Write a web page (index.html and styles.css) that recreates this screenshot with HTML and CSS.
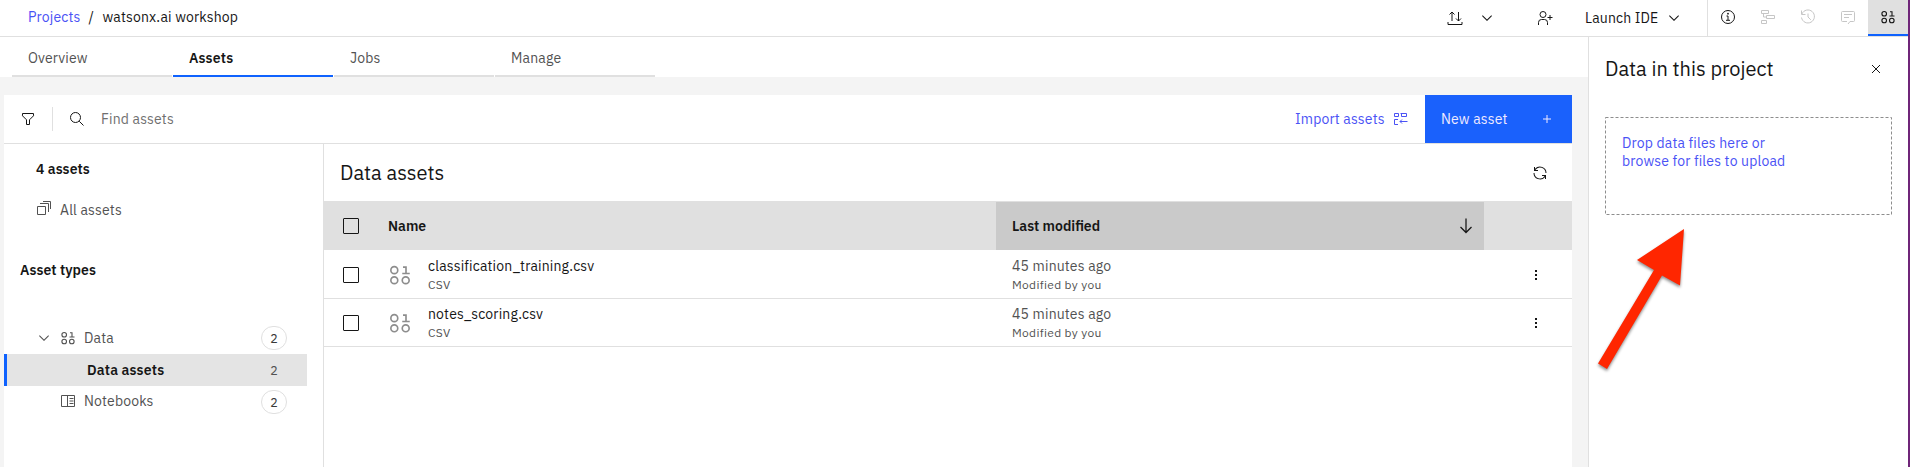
FILE: index.html
```html
<!DOCTYPE html>
<html lang="en">
<head>
<meta charset="utf-8">
<title>watsonx.ai workshop</title>
<link rel="stylesheet" href="styles.css">
</head>
<body>
<svg class="sprite" aria-hidden="true">
  <symbol id="chevron" viewBox="0 0 16 16"><path d="M8 11 3 6l.7-.7L8 9.6l4.3-4.3.7.7z"/></symbol>
  <symbol id="data" viewBox="0 0 32 32"><g fill="none" stroke="currentColor" stroke-width="2.200"><circle cx="8.400" cy="9.500" r="4.600"/><circle cx="8.400" cy="23" r="4.600"/><circle cx="23.600" cy="23" r="4.600"/><path d="M20 5.500h4v8M19 14h10"/></g></symbol>
</svg>
<div class="app">
  <header class="topbar">
    <nav class="crumbs"><a class="link">Projects</a><span class="slash">/</span><span>watsonx.ai workshop</span></nav>
    <div class="actions">
      <svg class="i16" viewBox="0 0 16 16"><path class="line" d="M1 12v2.500h14V12M5 11V2M2.500 4.500 5 2l2.500 2.500M11.500 2v9M9 8.500l2.500 2.500L14 8.500"/></svg>
      <svg class="i16 chev1"><use href="#chevron"/></svg>
      <svg class="i16 adduser" viewBox="0 0 16 16"><path class="line" d="M1.500 15v-2.500A3 3 0 0 1 4.500 9.500h3a3 3 0 0 1 3 3V15M13 5v5M10.500 7.500h5"/><circle class="line" cx="6" cy="4.500" r="3"/></svg>
      <span class="launch">Launch IDE</span>
      <svg class="i16 chev2"><use href="#chevron"/></svg>
    </div>
    <div class="panel-icons">
      <div class="cell"><svg class="i16" viewBox="0 0 16 16"><circle class="line" cx="8" cy="8" r="6.500"/><path class="line" d="M6.500 7H8v4M6 11.300h4"/><circle cx="8" cy="4.700" r=".9"/></svg></div>
      <div class="cell off"><svg class="i16" viewBox="0 0 16 16"><path class="line" d="M1.500 1.500h7v3h-7zM6.500 6.500h8v3h-8zM1.500 11.500h5v3h-5zM3.500 4.500V8h3"/></svg></div>
      <div class="cell off"><svg class="i16" viewBox="0 0 16 16"><path class="line" d="M1.500 1.500v4h4M1.900 5A6.500 6.500 0 1 1 1.500 8.500M8 4.500V8l2.800 2.800"/></svg></div>
      <div class="cell off"><svg class="i16" viewBox="0 0 16 16"><path class="line" d="M7 12.500H2.500a1 1 0 0 1-1-1v-8a1 1 0 0 1 1-1h11a1 1 0 0 1 1 1v8a1 1 0 0 1-1 1H10L8 15M4 5.500h8M4 8.500h5"/></svg></div>
      <div class="cell on"><svg class="i16"><use href="#data"/></svg></div>
    </div>
  </header>
  <div class="body">
    <main class="main">
      <nav class="tabs"><a class="tab">Overview</a><a class="tab active">Assets</a><a class="tab">Jobs</a><a class="tab">Manage</a></nav>
      <div class="card">
        <div class="toolbar">
          <svg class="i16 filter" viewBox="0 0 16 16"><path class="line" d="M2.500 2.500h11v2.300L9.500 8.800v4.700h-3V8.800l-4-4z"/></svg>
          <i class="sep"></i>
          <svg class="i16" viewBox="0 0 16 16"><circle class="line" cx="6.500" cy="6.500" r="5"/><path class="line" d="M10.200 10.200l4.300 4.300"/></svg>
          <span class="placeholder">Find assets</span>
          <a class="import link"><span>Import assets</span><svg class="i16" viewBox="0 0 16 16"><path class="line" d="M1.500 2.500h4v3h-4zM8.500 2v3.500h5v-3H7.500M5 8.500H1.500v5H5M14.500 10.500H7M9 8.500l-2 2 2 2"/></svg></a>
          <button class="new"><span>New asset</span><svg class="i16" viewBox="0 0 16 16"><path class="line" d="M8 4v8M4 8h8"/></svg></button>
        </div>
        <div class="content">
          <aside class="side">
            <h2 class="count">4 assets</h2>
            <div class="all"><svg class="i16" viewBox="0 0 16 16"><path class="line" d="M1.500 6.500h8v8h-8zM4 3.500h8.500V12M7 1.500h7.500V9"/></svg><span>All assets</span></div>
            <h2 class="types">Asset types</h2>
            <ul class="tree">
              <li><svg class="i16 tw"><use href="#chevron"/></svg><svg class="i16"><use href="#data"/></svg><span class="name">Data</span><b class="badge">2</b></li>
              <li class="sel"><span class="name">Data assets</span><b class="badge plain">2</b></li>
              <li class="nb"><i class="tw"></i><svg class="i16" viewBox="0 0 16 16"><path class="line" d="M1.500 2.500h13v11h-13zM7.500 2.500v11M9.500 5.500h4M9.500 8h4M9.500 10.500h4"/></svg><span class="name">Notebooks</span><b class="badge">2</b></li>
            </ul>
          </aside>
          <section class="list">
            <div class="title"><h1>Data assets</h1><svg class="i16" viewBox="0 0 32 32"><path d="M12 10H6.780A11 11 0 0 1 27 16h2A13 13 0 0 0 6 7.680V4H4v8h8zM20 22h5.220A11 11 0 0 1 5 16H3A13 13 0 0 0 26 24.320V28h2V20H20z"/></svg></div>
            <div class="row head">
              <i class="check"></i><span class="hname">Name</span>
              <div class="modhead"><span>Last modified</span><svg class="i20" viewBox="0 0 20 20"><path class="line arrow" d="M10 2.500v14M4.500 11l5.500 5.500L15.500 11"/></svg></div>
            </div>
            <div class="row">
              <i class="check"></i><svg class="i24"><use href="#data"/></svg>
              <div class="file"><span>classification_training.csv</span><small>CSV</small></div>
              <div class="mod"><span>45 minutes ago</span><small>Modified by you</small></div>
              <svg class="i16 kebab" viewBox="0 0 16 16"><path d="M7 3h2v2H7zM7 7h2v2H7zM7 11h2v2H7z"/></svg>
            </div>
            <div class="row">
              <i class="check"></i><svg class="i24"><use href="#data"/></svg>
              <div class="file"><span>notes_scoring.csv</span><small>CSV</small></div>
              <div class="mod"><span>45 minutes ago</span><small>Modified by you</small></div>
              <svg class="i16 kebab" viewBox="0 0 16 16"><path d="M7 3h2v2H7zM7 7h2v2H7zM7 11h2v2H7z"/></svg>
            </div>
          </section>
        </div>
      </div>
    </main>
    <aside class="panel">
      <div class="panel-head"><h1>Data in this project</h1><svg class="i16" viewBox="0 0 16 16"><path class="line" d="M4 4l8 8M12 4l-8 8"/></svg></div>
      <div class="drop"><svg class="dash"><rect x=".5" y=".5" width="286" height="97"/></svg><span class="link">Drop data files here or</span><span class="link">browse for files to upload</span></div>
      <svg class="pointer" viewBox="0 0 100 150"><path d="M86 4 39 35l17 10L0 138.500l9 5.500 55-93.500 18 10z"/></svg>
    </aside>
  </div>
</div>
</body>
</html>
```
FILE: styles.css
```css
* { box-sizing: border-box; }
body { margin: 0; background: #fff; color: #161616; font: 14px/18px "IBM Plex Sans", Roboto, "Liberation Sans", sans-serif; letter-spacing: .16px; }
h1, h2, ul { margin: 0; padding: 0; list-style: none; }
h1 { font-size: 20px; font-weight: 400; line-height: 28px; letter-spacing: 0; }
h2 { font-size: 14px; font-weight: 600; line-height: 18px; letter-spacing: .05px; }
span, h1, small { white-space: nowrap; }
.sprite { display: none; }
svg { fill: currentColor; flex: none; overflow: visible; }
.line { fill: none; stroke: currentColor; stroke-width: 1; }
.i16 { width: 16px; height: 16px; }
.i20 { width: 20px; height: 20px; }
.i24 { width: 24px; height: 24px; color: #8d8d8d; }
.arrow { stroke-width: 1.250; }
.link { color: #4a52f5; }

.app { width: 1910px; height: 467px; display: flex; flex-direction: column; border-right: 2px solid #6f2579; overflow: hidden; }
.topbar { display: flex; flex: none; height: 37px; border-bottom: 1px solid #e0e0e0; }
.crumbs { display: flex; align-items: center; flex: 1; padding: 0 0 2px 28px; }
.slash { width: 22px; padding-left: 8px; }
.actions { display: flex; align-items: center; }
.chev1 { margin: 0 42px 0 16px; }
.adduser { margin-right: 32px; }
.launch { width: 73px; }
.chev2 { margin: 0 25px 0 8px; }
.panel-icons { display: flex; border-left: 1px solid #e0e0e0; }
.cell { width: 40px; height: 36px; display: flex; align-items: center; justify-content: center; padding-bottom: 2px; }
.off { color: #c6c6c6; }
.on { background: #e0e0e0; border-bottom: 2px solid #0f62fe; padding-bottom: 0; }

.body { flex: 1; display: flex; min-height: 0; }
.main { width: 1588px; background: #f4f4f4; display: flex; flex-direction: column; }
.tabs { display: flex; gap: 1px; height: 40px; padding-left: 12px; background: #fff; flex: none; }
.tab { width: 160px; height: 40px; padding: 12px 16px; border-bottom: 2px solid #e0e0e0; color: #525252; }
.tab.active { color: #161616; font-weight: 600; border-color: #0f62fe; }
.card { flex: 1; margin: 18px 16px 0 4px; background: #fff; display: flex; flex-direction: column; }
.toolbar { height: 49px; border-bottom: 1px solid #e0e0e0; display: flex; align-items: center; flex: none; }
.filter { margin-left: 16px; }
.sep { width: 1px; height: 24px; margin: 0 16px; background: #e0e0e0; }
.placeholder { flex: 1; color: #6f6f6f; margin-left: 16px; }
.import { display: flex; align-items: center; }
.import span { width: 98px; }
.new { display: flex; align-items: center; justify-content: space-between; width: 147px; height: 48px; margin-left: 16px; padding: 0 17px 0 16px; border: 0; background: #1a61fc; color: #f1eaff; font: inherit; letter-spacing: inherit; }
.content { flex: 1; display: flex; min-height: 0; }
.side { width: 320px; border-right: 1px solid #e0e0e0; }
.count { padding: 16px 0 0 32px; }
.all { display: flex; align-items: center; gap: 8px; height: 18px; margin-top: 23px; padding-left: 32px; color: #525252; }
.all svg { margin-bottom: 4px; }
.types { margin-top: 42px; padding-left: 16px; }
.tree { margin-top: 43px; width: 303px; color: #525252; }
.tree li { height: 32px; display: flex; align-items: center; padding: 0 20px 0 32px; }
.tw { width: 16px; height: 16px; margin-right: 8px; }
.name { flex: 1; margin-left: 8px; }
.tree .sel { background: #e4e4e4; border-left: 3px solid #0f62fe; color: #161616; font-weight: 600; }
.sel .name { margin-left: 48px; }
.nb .name, .nb svg { margin-bottom: 2px; }
.badge { width: 26px; height: 24px; border: 1px solid #e0e0e0; border-radius: 12px; font-size: 12.500px; font-weight: 400; line-height: 22px; text-align: center; color: #393939; }
.plain { border-color: transparent; color: #525252; }

.list { flex: 1; }
.title { display: flex; align-items: center; justify-content: space-between; height: 57px; padding: 1px 24px 0 16px; }
.row { display: flex; align-items: center; height: 48px; padding-left: 19px; border-bottom: 1px solid #e0e0e0; }
.head { height: 49px; margin-bottom: 1px; background: #e0e0e0; border: 0; font-weight: 600; letter-spacing: 0; }
.check { width: 16px; height: 16px; border: 1px solid #161616; border-radius: 1px; flex: none; }
.hname { margin-left: 29px; width: 608px; }
.modhead { display: flex; align-items: center; justify-content: space-between; width: 488px; height: 48px; margin-top: 1px; padding: 0 8px 0 16px; background: #cacaca; }
.row .i24 { margin: 0 16px 0 29px; }
.file { width: 584px; }
.file, .mod { padding-top: 1px; }
.file span, .file small, .mod span, .mod small { display: block; }
.mod { width: 516px; color: #525252; }
small { margin-top: 1px; font-size: 12px; line-height: 18px; letter-spacing: .32px; color: #525252; }
.kebab { color: #161616; }

.panel { position: relative; flex: 1; border-left: 1px solid #e0e0e0; padding: 18px 16px; }
.panel-head { display: flex; justify-content: space-between; align-items: center; padding-right: 8px; }
.drop { position: relative; width: 287px; height: 98px; margin-top: 34px; padding: 17px; }
.drop span { display: block; }
.dash { position: absolute; left: 0; top: 0; width: 287px; height: 98px; fill: none; stroke: #8d8d8d; stroke-dasharray: 3 2; }
.pointer { position: absolute; left: 9px; top: 188px; width: 100px; height: 150px; color: #ff2600; filter: drop-shadow(0 2px 1.500px rgba(0, 0, 0, .45)); }
```
